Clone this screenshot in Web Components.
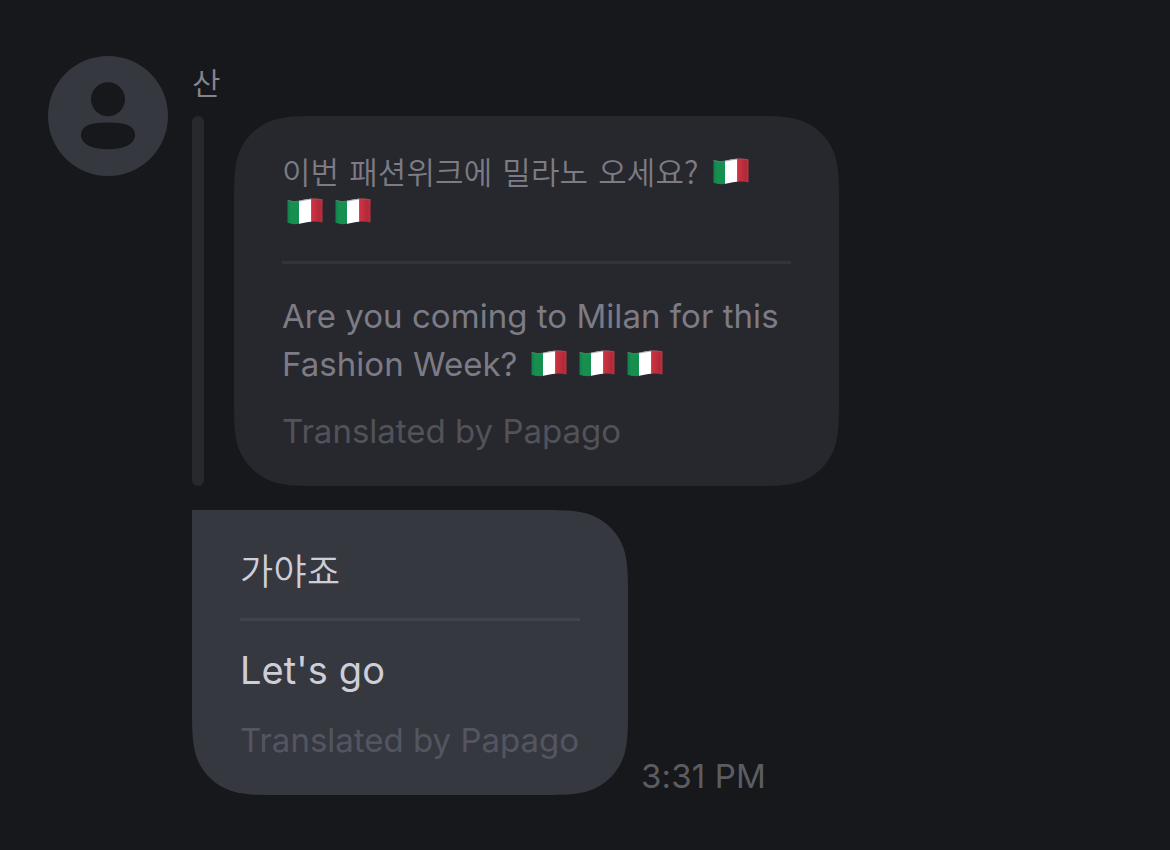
<!DOCTYPE html>
<html lang="ko">
<head>
<meta charset="utf-8">
<title>Chat</title>
<style>
    body {
        margin: 0;
        background: #17181c;
        font-family: Inter, "Noto Sans CJK KR", sans-serif;
    }
</style>
</head>
<body>
<chat-message>
    <user-avatar slot="avatar"></user-avatar>
    <span slot="name">산</span>
    <chat-bubble slot="quote" quoted>
        <span slot="original">이번 패션위크에 밀라노 오세요? <flag-italy></flag-italy><flag-italy></flag-italy><flag-italy></flag-italy></span>
        <span slot="translated">Are you coming to Milan for this Fashion Week? <flag-italy></flag-italy><flag-italy></flag-italy><flag-italy></flag-italy></span>
        <span slot="credit">Translated by Papago</span>
    </chat-bubble>
    <chat-bubble slot="reply">
        <span slot="original">가야죠</span>
        <span slot="translated">Let's go</span>
        <span slot="credit">Translated by Papago</span>
    </chat-bubble>
    <span slot="time">3:31 PM</span>
</chat-message>

<script>
class FlagItaly extends HTMLElement {
    constructor() {
        super();
        const shadow = this.attachShadow({ mode: 'open' });
        shadow.innerHTML = `
            <style>
                :host {
                    display: inline-block;
                    width: 36px;
                    height: 27px;
                    margin: 0 7.5px 0 4.5px;
                    vertical-align: -1px;
                    line-height: 0;
                }
            </style>
            <svg width="36" height="27" viewBox="0 0 36 27" role="img">
                <defs>
                    <clipPath id="wave">
                        <path d="M.5 1.8Q6 4 11.5 2.8C19 1.3 27-.8 35.5 1.6V24.6C27 22.4 20 24.2 12.5 25.7Q6 27 .5 24.8Z"/>
                    </clipPath>
                    <linearGradient id="shade">
                        <stop offset="0" stop-color="#000" stop-opacity=".12"/>
                        <stop offset=".12" stop-color="#000" stop-opacity="0"/>
                        <stop offset=".72" stop-color="#000" stop-opacity="0"/>
                        <stop offset=".9" stop-color="#000" stop-opacity=".14"/>
                        <stop offset="1" stop-color="#000" stop-opacity=".04"/>
                    </linearGradient>
                </defs>
                <g clip-path="url(#wave)">
                    <rect width="12" height="27" fill="#159050"/>
                    <rect x="12" width="12.5" height="27" fill="#fff"/>
                    <rect x="24.3" width="12" height="27" fill="#cc3142"/>
                    <rect width="36" height="27" fill="url(#shade)"/>
                </g>
                <path d="M.5 2.3Q6 4.5 11.5 3.3C19 1.8 27-.3 35.5 2.1" fill="none" stroke="#77787d" stroke-opacity=".6"/>
            </svg>
        `;
    }
}

class UserAvatar extends HTMLElement {
    constructor() {
        super();
        const shadow = this.attachShadow({ mode: 'open' });
        shadow.innerHTML = `
            <style>
                :host { display: block; width: 120px; height: 120px; }
                svg { display: block; }
            </style>
            <svg width="120" height="120" viewBox="0 0 120 120">
                <circle cx="60" cy="60" r="60" fill="#363840"/>
                <circle cx="60" cy="43.3" r="17" fill="#17181c"/>
                <path d="M60 66.4C76 66.4 87 69 87 79C87 89 74 93.3 60 93.3S33 89 33 79C33 69 44 66.4 60 66.4Z" fill="#17181c"/>
            </svg>
        `;
    }
}

class ChatBubble extends HTMLElement {
    constructor() {
        super();
        const shadow = this.attachShadow({ mode: 'open' });
        shadow.innerHTML = `
            <style>
                :host {
                    display: block;
                    box-sizing: border-box;
                    width: 436px;
                    padding: 35px 48px 31px;
                    background: #363840;
                    color: #cfced8;
                }
                :host([quoted]) {
                    width: 605px;
                    padding-top: 35px;
                    background: #27282d;
                    color: #7c7b86;
                }
                .original {
                    font: 36px/48px "Noto Sans CJK KR", sans-serif;
                    font-weight: 350;
                    letter-spacing: 0.4px;
                }
                .translated {
                    font-size: 38px;
                    line-height: 48px;
                    letter-spacing: 0.1px;
                }
                .credit {
                    margin-top: 22px;
                    font-size: 33px;
                    line-height: 48px;
                    white-space: nowrap;
                    color: #535660;
                }
                hr {
                    height: 3px;
                    margin: 25px 0 25px;
                    border: 0;
                    background: #42444c;
                }
                :host([quoted]) .original {
                    font-size: 31px;
                    line-height: 40px;
                    letter-spacing: 0.1px;
                    word-spacing: 1.2px;
                }
                :host([quoted]) .translated { font-size: 33px; letter-spacing: 0.04px; }
                :host([quoted]) .credit { margin-top: 19px; color: #51525a; }
                :host([quoted]) hr { margin: 30px 0 28px; background: #33333b; }
            </style>
            <div class="original"><slot name="original"></slot></div>
            <hr>
            <div class="translated"><slot name="translated"></slot></div>
            <div class="credit"><slot name="credit"></slot></div>
        `;
    }

    connectedCallback() {
        this.observer = new ResizeObserver(() => this.roundCorners());
        this.observer.observe(this);
        this.roundCorners();
    }

    disconnectedCallback() {
        this.observer.disconnect();
    }

    // smooth corners: the curve starts at about 1.53 of the radius
    roundCorners() {
        const w = this.offsetWidth;
        const h = this.offsetHeight;
        const r = 60;
        const half = [
            [1.5287, 0], [1.0885, 0], [0.8684, 0], [0.6315, 0.0749],
            [0.3728, 0.1691], [0.1691, 0.3728], [0.0749, 0.6315],
            [0, 0.8684], [0, 1.0885], [0, 1.5287]
        ];
        const back = [...half].reverse();
        const corner = (points, right, bottom) => {
            const p = points.map(([x, y]) => `${right ? w - x * r : x * r} ${bottom ? h - y * r : y * r}`);
            return `L${p[0]}C${p.slice(1).join(' ')}`;
        };
        const start = this.hasAttribute('quoted') ? corner(back, false, false) : 'L0 0';
        const d = start.replace('L', 'M')
            + corner(half, true, false)
            + corner(back, true, true)
            + corner(half, false, true) + 'Z';
        this.style.clipPath = `path("${d}")`;
    }
}

class ChatMessage extends HTMLElement {
    constructor() {
        super();
        const shadow = this.attachShadow({ mode: 'open' });
        shadow.innerHTML = `
            <style>
                :host {
                    display: flex;
                    align-items: flex-start;
                    gap: 24px;
                    padding: 56px 48px 0;
                }
                .name {
                    height: 60px;
                    font: 350 31px/52px "Noto Sans CJK KR", sans-serif;
                    color: #85858b;
                }
                .quote {
                    display: flex;
                    gap: 30px;
                    margin-bottom: 24px;
                }
                .bar {
                    width: 12px;
                    border-radius: 6px;
                    background: #28292d;
                }
                .reply {
                    display: flex;
                    align-items: flex-end;
                    gap: 13px;
                }
                .time {
                    font-size: 33px;
                    line-height: 38px;
                    letter-spacing: 0.15px;
                    color: #5c5d62;
                }
            </style>
            <slot name="avatar"></slot>
            <div>
                <div class="name"><slot name="name"></slot></div>
                <div class="quote">
                    <div class="bar"></div>
                    <slot name="quote"></slot>
                </div>
                <div class="reply">
                    <slot name="reply"></slot>
                    <div class="time"><slot name="time"></slot></div>
                </div>
            </div>
        `;
    }
}

customElements.define('flag-italy', FlagItaly);
customElements.define('user-avatar', UserAvatar);
customElements.define('chat-bubble', ChatBubble);
customElements.define('chat-message', ChatMessage);
</script>
</body>
</html>
